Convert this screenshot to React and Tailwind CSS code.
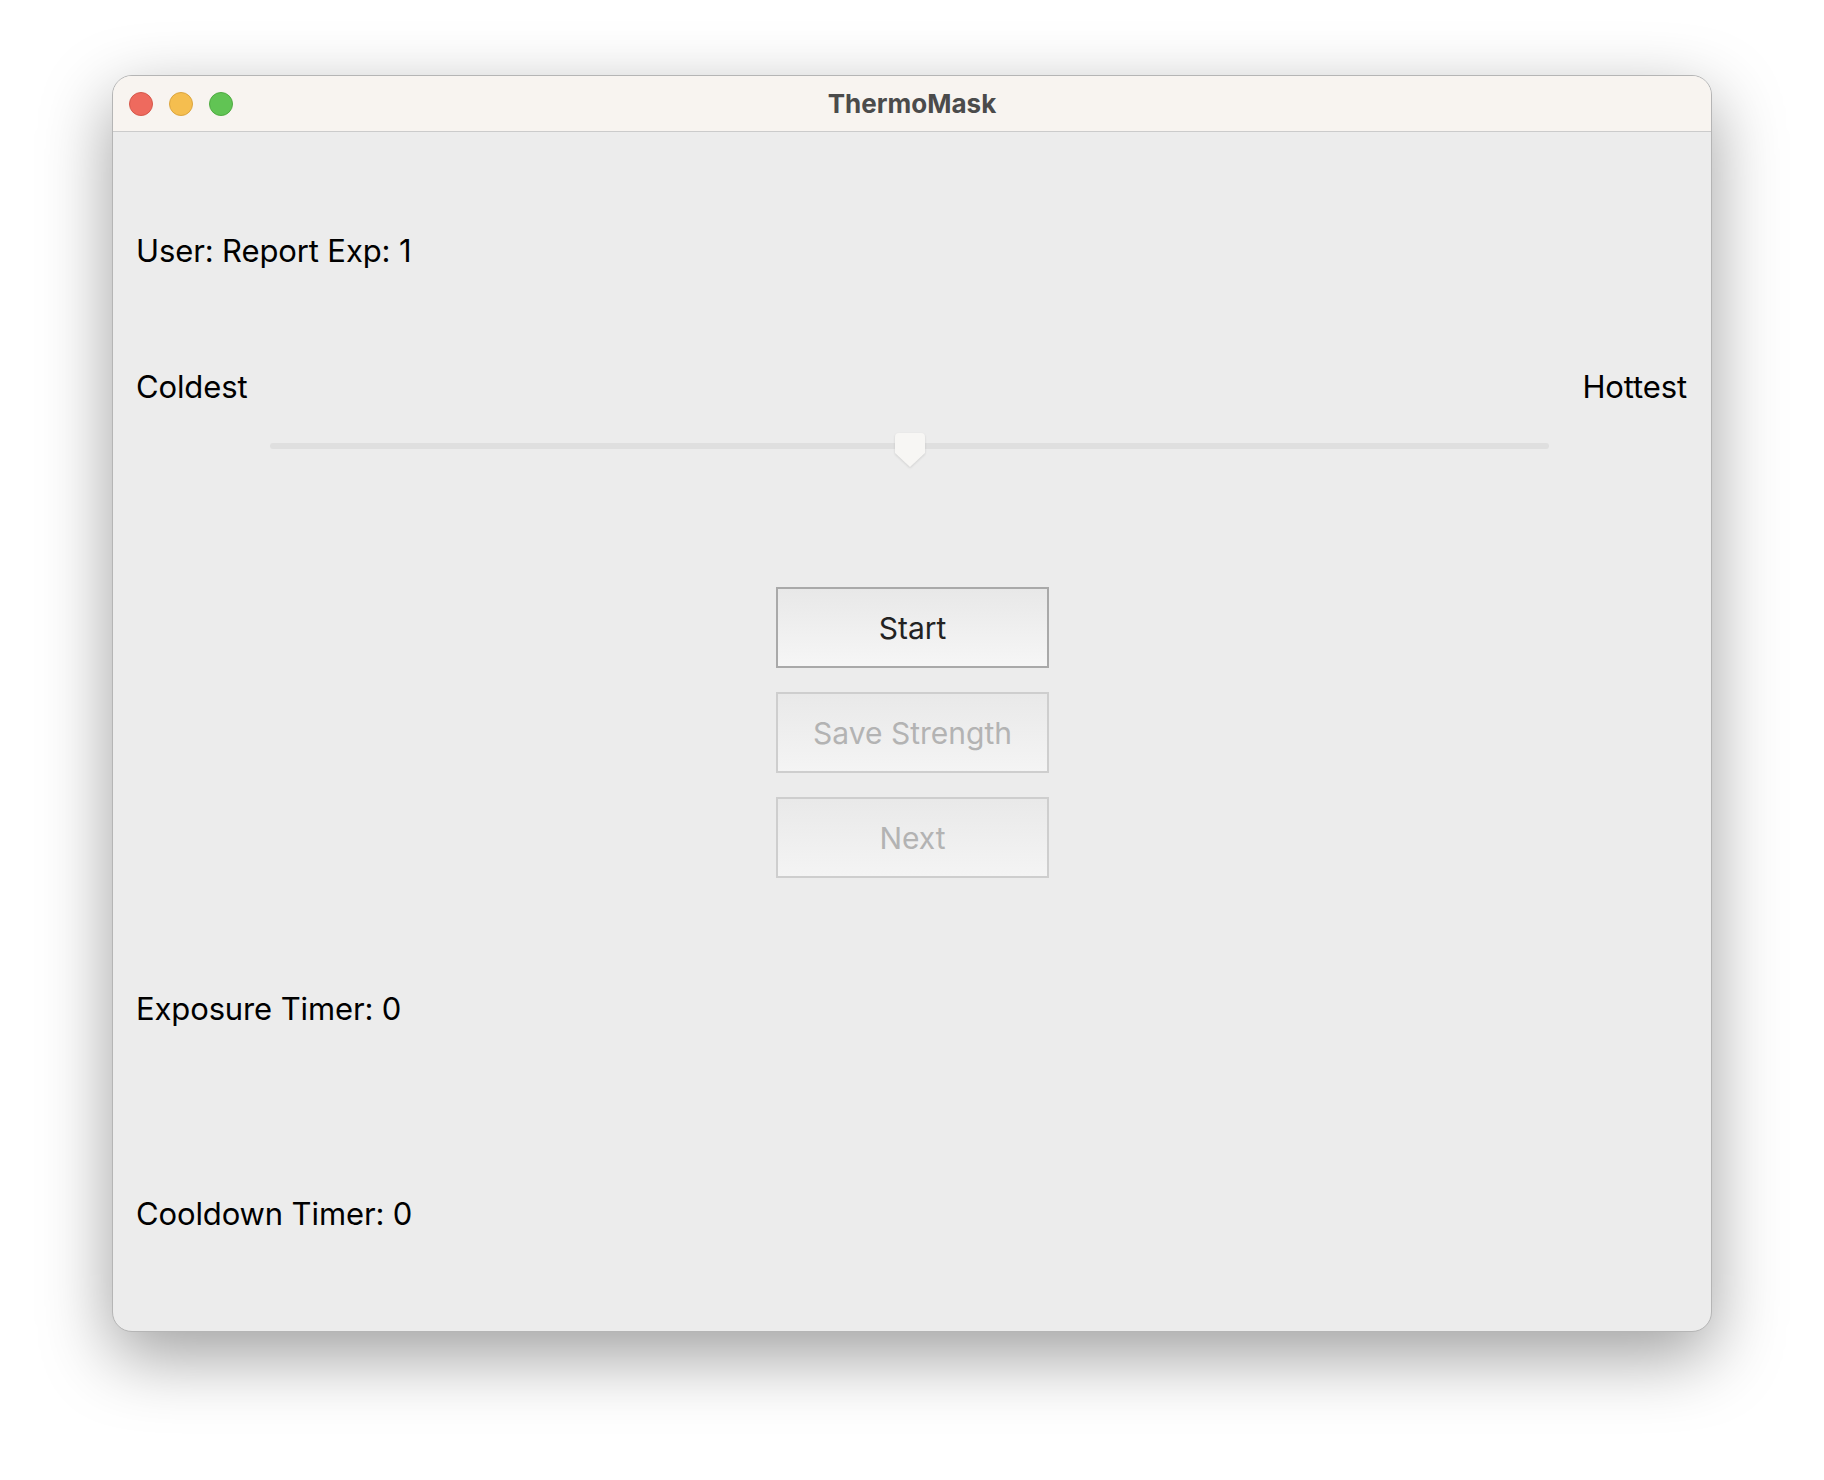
import React from 'react';

const font = { fontFamily: 'Inter, "Noto Sans", sans-serif' };

const TrafficLights = () => (
    <div className="flex items-center gap-4 pl-4">
        <div className="w-6 h-6 rounded-full bg-[#ee6a5e] border border-[#d5584b]"></div>
        <div className="w-6 h-6 rounded-full bg-[#f5be4f] border border-[#dba53f]"></div>
        <div className="w-6 h-6 rounded-full bg-[#61c454] border border-[#50ab42]"></div>
    </div>
);

const Thumb = () => (
    <svg width="30" height="34" viewBox="0 0 30 34" className="drop-shadow-[0_1px_1px_rgba(0,0,0,0.12)]">
        <path d="M4 0 H26 Q30 0 30 4 V20 L15 34 L0 20 V4 Q0 0 4 0 Z" fill="#f7f6f4" />
    </svg>
);

const Slider = () => (
    <div className="relative h-[34px] mt-[31px] ml-[134px] mr-[138px] pt-[10px]">
        <div className="w-full h-[6px] rounded-full bg-[#dfdfdf]"></div>
        <div className="absolute top-0 left-1/2 -translate-x-1/2">
            <Thumb />
        </div>
    </div>
);

const Button = ({ children, disabled }) => (
    <button
        className={
            disabled
                ? 'w-[273px] h-[81px] border-2 border-[#cecece] bg-gradient-to-b from-[#e9e9e9] to-[#f4f4f4] text-[#b3b3b3] text-[30px] leading-none'
                : 'w-[273px] h-[81px] border-2 border-[#a9a9a9] bg-gradient-to-b from-[#e8e8e8] to-[#f6f6f6] text-[#222222] text-[30px] leading-none'
        }
        style={font}
    >
        {children}
    </button>
);

export default function App() {
    return (
        <div className="w-[1824px] h-[1480px] bg-white pt-[75px] pl-[112px]" style={font}>
            <div className="w-[1600px] h-[1257px] rounded-[20px] overflow-hidden border border-[#b5b5b5] bg-[#ececec] shadow-[0_24px_70px_rgba(0,0,0,0.38)] flex flex-col">
                <div className="relative h-[56px] flex-shrink-0 bg-[#f8f4f0] border-b border-[#cbcbcb] flex items-center">
                    <TrafficLights />
                    <div className="absolute inset-0 flex items-center justify-center text-[26px] font-bold text-[#4b4b4b]">
                        ThermoMask
                    </div>
                </div>

                <div className="flex flex-col pl-[23px] pr-[24px] text-[31px] leading-none tracking-[-0.004em] text-black">
                    <div className="mt-[103px]">User: Report Exp: 1</div>

                    <div className="mt-[105px] flex justify-between">
                        <span>Coldest</span>
                        <span>Hottest</span>
                    </div>

                    <Slider />

                    <div className="mt-[120px] pl-[2px] flex flex-col items-center gap-[24px] tracking-normal">
                        <Button>Start</Button>
                        <Button disabled>Save Strength</Button>
                        <Button disabled>Next</Button>
                    </div>

                    <div className="mt-[115px]">Exposure Timer: 0</div>
                    <div className="mt-[174px]">Cooldown Timer: 0</div>
                </div>
            </div>
        </div>
    );
}
